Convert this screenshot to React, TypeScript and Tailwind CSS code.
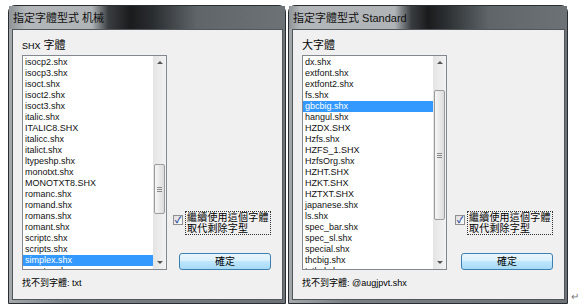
const font = "font-['Liberation_Sans','Noto_Sans_CJK_TC',sans-serif]";

const leftItems = [
  "isocp2.shx",
  "isocp3.shx",
  "isoct.shx",
  "isoct2.shx",
  "isoct3.shx",
  "italic.shx",
  "ITALIC8.SHX",
  "italicc.shx",
  "italict.shx",
  "ltypeshp.shx",
  "monotxt.shx",
  "MONOTXT8.SHX",
  "romanc.shx",
  "romand.shx",
  "romans.shx",
  "romant.shx",
  "scriptc.shx",
  "scripts.shx",
  "simplex.shx",
  "syastro.shx",
];

const rightItems = [
  "dx.shx",
  "extfont.shx",
  "extfont2.shx",
  "fs.shx",
  "gbcbig.shx",
  "hangul.shx",
  "HZDX.SHX",
  "Hzfs.shx",
  "HZFS_1.SHX",
  "HzfsOrg.shx",
  "HZHT.SHX",
  "HZKT.SHX",
  "HZTXT.SHX",
  "japanese.shx",
  "ls.shx",
  "spec_bar.shx",
  "spec_sl.shx",
  "special.shx",
  "thcbig.shx",
  "txtlsd.shx",
];

function Grip() {
  return (
    <div className="flex flex-col gap-[1px]">
      <div className="h-[1px] w-[5px] bg-[#8a8a8a]" />
      <div className="h-[1px] w-[5px] bg-[#8a8a8a]" />
      <div className="h-[1px] w-[5px] bg-[#8a8a8a]" />
    </div>
  );
}

function ScrollBar({ thumb }: { thumb: string }) {
  return (
    <div className="flex w-[13px] flex-col bg-[linear-gradient(90deg,#e4e4e4,#f3f3f3)]">
      <div className="flex h-[13px] items-center justify-center">
        <div className="h-0 w-0 border-x-[3px] border-b-[3px] border-x-transparent border-b-[#555]" />
      </div>
      <div className="flex flex-1 flex-col">
        <div
          className={`mx-[1px] flex items-center justify-center rounded-[2px] border border-[#9b9b9b] bg-[linear-gradient(90deg,#f6f6f6,#dcdcdc)] ${thumb}`}
        >
          <Grip />
        </div>
      </div>
      <div className="flex h-[13px] items-center justify-center">
        <div className="h-0 w-0 border-x-[3px] border-t-[3px] border-x-transparent border-t-[#555]" />
      </div>
    </div>
  );
}

function Dialog({
  title,
  titleBar,
  width,
  label,
  items,
  selected,
  thumb,
  missing,
  gap,
}: {
  title: string;
  titleBar: string;
  width: string;
  label: React.ReactNode;
  items: string[];
  selected: string;
  thumb: string;
  missing: string;
  gap: string;
}) {
  return (
    <div
      className={`flex h-[299px] flex-col rounded-t-[7px] border border-[#2a2e32] bg-[linear-gradient(90deg,#a3a8ab,#7a8084_20%,#6c7276)] ${width}`}
    >
      <div className={`flex h-[23px] items-center pl-[4px] ${titleBar}`}>
        <span className="text-[11px] leading-[12px] text-[#111]">{title}</span>
      </div>
      <div className="mb-[3px] ml-[3px] mr-[2px] flex flex-1 flex-col border border-[#50565a] bg-[#f0f0f0] pl-[9px] pt-[9px]">
        <div className="h-[13px] text-[11px] leading-[13px] text-black">{label}</div>
        <div className={`mt-[3px] flex h-[215px] ${gap}`}>
          <div className="flex w-[145px] border border-[#828790] bg-white">
            <div className="flex-1 overflow-hidden pt-[1px]">
              {items.map((it) => (
                <div
                  key={it}
                  className={`h-[11px] pl-[2px] text-[9px] leading-[11px] whitespace-nowrap ${
                    it === selected ? "bg-[#3399ff] text-white" : "text-[#111]"
                  }`}
                >
                  {it}
                </div>
              ))}
            </div>
            <ScrollBar thumb={thumb} />
          </div>
          <div className="flex w-[100px] flex-col justify-end">
            <div className="flex items-start gap-[2px] whitespace-nowrap">
              <div className="mt-[4px] flex h-[10px] w-[10px] shrink-0 items-center justify-center border border-[#8e8f8f] bg-[linear-gradient(135deg,#dcdcdc,#ffffff)] text-[9px] leading-[9px] font-bold text-[#2a4a9b]">
                ✓
              </div>
              <div className="border border-dotted border-[#333] px-[1px] text-[10px] leading-[11px] tracking-[0.2px] text-black">
                <div>繼續使用這個字體</div>
                <div>取代剩除字型</div>
              </div>
            </div>
            <div className="mt-[18px] ml-[6px] flex h-[17px] w-[92px] items-center justify-center rounded-[3px] border border-[#3c7fb1] bg-[linear-gradient(180deg,#eaf6fd,#d9f0fc_45%,#bee6fd_50%,#a7d9f5)] text-[10px] leading-[11px] text-black">
              確定
            </div>
          </div>
        </div>
        <div className="mt-[7px] h-[12px] text-[9px] leading-[12px] text-black">
          找不到字體: {missing}
        </div>
      </div>
    </div>
  );
}

export default function App() {
  return (
    <div className={`flex h-[307px] w-[582px] items-start bg-white pl-[8px] pt-[5px] ${font}`}>
      <Dialog
        title="指定字體型式 机械"
        titleBar="bg-[linear-gradient(90deg,#8e9497_0%,#b3b7b9_6%,#b0b4b7_30%,#3a3d40_36%,#1a1b1d_44%,#2a2d30_52%,#5f6569_68%,#6c7276_100%)]"
        width="w-[278px]"
        label={
          <>
            <span className="text-[9px]">SHX</span> 字體
          </>
        }
        items={leftItems}
        selected="simplex.shx"
        thumb="mt-[95px] h-[50px]"
        missing="txt"
        gap="gap-[6px]"
      />
      <div className="w-[2px]" />
      <Dialog
        title="指定字體型式 Standard"
        titleBar="bg-[linear-gradient(90deg,#8e9497_0%,#b3b7b9_4%,#b0b4b7_38%,#3a3d40_44%,#1a1b1d_50%,#2a2d30_56%,#5f6569_72%,#6c7276_100%)]"
        width="w-[280px]"
        label="大字體"
        items={rightItems}
        selected="gbcbig.shx"
        thumb="mt-[21px] h-[130px]"
        missing="@augjpvt.shx"
        gap="gap-[8px]"
      />
      <span className="mt-[286px] ml-[3px] text-[10px] leading-[12px] text-[#777]">↵</span>
    </div>
  );
}
